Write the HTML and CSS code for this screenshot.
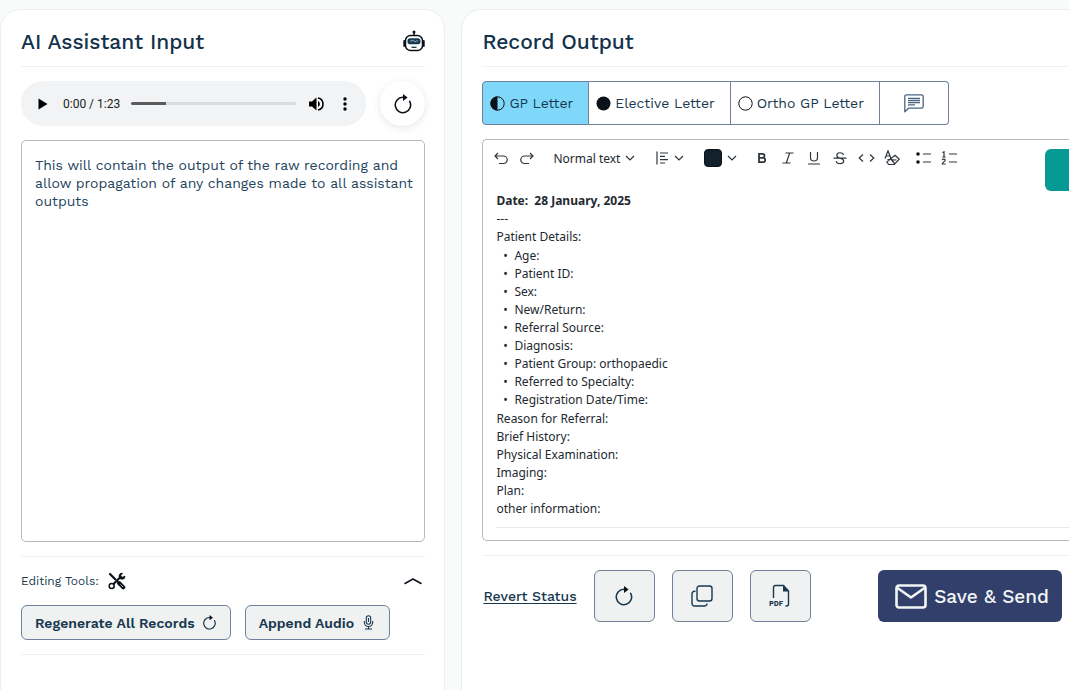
FILE: index.html
```html
<!DOCTYPE html>
<html lang="en">
<head>
    <meta charset="UTF-8">
    <meta name="viewport" content="width=device-width, initial-scale=1.0">
    <title>AI Assistant</title>
    <link rel="stylesheet" href="styles.css">
</head>
<body>
    <!-- Shared icons -->
    <svg class="sprite" aria-hidden="true">
        <symbol id="icon-refresh" viewBox="0 0 24 24">
            <path d="M20 8.800A9.200 9.200 0 1 1 12 4h2" fill="none" stroke="currentColor" stroke-width="1.900" stroke-linecap="round"/>
            <path d="M12 0L17.500 4.200L12 8.500Z" fill="#0b1118"/>
        </symbol>
        <symbol id="icon-chevron" viewBox="0 0 10 6">
            <path d="M1 1l4 4 4-4" fill="none" stroke="currentColor" stroke-width="1.2"/>
        </symbol>
    </svg>

    <main class="layout">
        <!-- Input -->
        <section class="card">
            <header class="card-header">
                <h2>AI Assistant Input</h2>
                <svg class="robot" viewBox="0 0 22 22">
                    <circle cx="11" cy="2" r="1.5" fill="#0b1118"/>
                    <path d="M11 3v3" stroke="#0b1118" stroke-width="1.500"/>
                    <rect x="2.500" y="5.500" width="17" height="15" rx="5" fill="#fff" stroke="#0b1118" stroke-width="1.5"/>
                    <path d="M1.200 11v5M20.800 11v5" stroke="#0b1118" stroke-width="1.800" stroke-linecap="round"/>
                    <rect x="4.500" y="8.300" width="13" height="6" rx="2.500" fill="#17384f"/>
                    <path d="M7 11h2l1.300-1 1.700 2 1.200-1h2" fill="none" stroke="#9fb6c4" stroke-width=".9"/>
                    <path d="M8.500 17.300h5" stroke="#17384f" stroke-width="1.300"/>
                </svg>
            </header>

            <div class="audio-row">
                <div class="player">
                    <button class="player-btn" aria-label="Play">
                        <svg width="10" height="12" viewBox="0 0 10 12"><path d="M.5.500L9.500 6l-9 5.500z"/></svg>
                    </button>
                    <span class="time">0:00 / 1:23</span>
                    <input class="seek" type="range" min="0" max="83" value="0" aria-label="Seek">
                    <button class="player-btn" aria-label="Mute">
                        <svg width="16" height="16" viewBox="0 0 16 16">
                            <path d="M1 5.500h3L8.500 1.500v13L4 10.500H1z"/>
                            <path d="M10 5v6a3.300 3.300 0 0 0 0-6z"/>
                            <path d="M10 2a6.100 6.100 0 0 1 0 12" fill="none" stroke="#000" stroke-width="1.600"/>
                        </svg>
                    </button>
                    <button class="player-btn" aria-label="More">
                        <svg width="4" height="14" viewBox="0 0 4 14"><circle cx="2" cy="2" r="1.700"/><circle cx="2" cy="7" r="1.700"/><circle cx="2" cy="12" r="1.700"/></svg>
                    </button>
                </div>
                <button class="round-btn" aria-label="Reload">
                    <svg width="20" height="20"><use href="#icon-refresh"/></svg>
                </button>
            </div>

            <textarea class="raw-text" aria-label="Raw recording">This will contain the output of the raw recording and allow propagation of any changes made to all assistant outputs</textarea>

            <div class="tools">
                <div class="tools-header">
                    <span>Editing Tools:</span>
                    <svg width="18" height="18" viewBox="0 0 18 18" fill="none" stroke="#0b1118">
                        <path d="M2 2l5 5" stroke-width="2.200" stroke-linecap="round"/>
                        <path d="M6.500 6.500l4.500 4.500" stroke-width="1.300"/>
                        <path d="M11 11l4.300 4.300" stroke-width="4" stroke-linecap="round"/>
                        <path d="M12.500 12.500l2.500 2.500" stroke="#fff" stroke-width=".7"/>
                        <path d="M5 12.500L12 5.500" stroke-width="2.200"/>
                        <circle cx="3.700" cy="14" r="2.500" stroke-width="1.500"/>
                        <path d="M14.500 1.300A3 3 0 1 0 17 4.200L14.500 5.200L13 3.700z" fill="#0b1118" stroke-width=".8"/>
                        <path d="M16 1.600L13.600 4.100" stroke="#fff" stroke-width="1.200"/>
                    </svg>
                    <button class="collapse" aria-label="Collapse">
                        <svg width="18" height="8" viewBox="0 0 18 8"><path d="M1 6.500L9 2l8 4.500" fill="none" stroke="#0b1118" stroke-width="1.500" stroke-linecap="round" stroke-linejoin="round"/></svg>
                    </button>
                </div>
                <div class="tools-buttons">
                    <button class="btn">Regenerate All Records
                        <svg width="15" height="15"><use href="#icon-refresh"/></svg>
                    </button>
                    <button class="btn">Append Audio
                        <svg width="15" height="15" viewBox="0 0 15 15" fill="none" stroke="#17384f" stroke-width="1.100">
                            <rect x="5.300" y=".7" width="4.400" height="8.600" rx="2.200"/>
                            <path d="M3.300 6v1.300a4.200 4.200 0 0 0 8.400 0V6M7.500 11.500v2.500M4 14h7M7.500 3v4"/>
                        </svg>
                    </button>
                </div>
            </div>
        </section>

        <!-- Output -->
        <section class="card card-output">
            <header class="card-header">
                <h2>Record Output</h2>
            </header>

            <div class="tabs">
                <button class="tab active">
                    <svg width="15" height="15" viewBox="0 0 15 15"><circle cx="7.500" cy="7.500" r="6.700" fill="none" stroke="#0b1118"/><path d="M7.500.500a7 7 0 0 0 0 14z" fill="#0b1118"/></svg>
                    GP Letter
                </button>
                <button class="tab">
                    <svg width="15" height="15" viewBox="0 0 15 15"><circle cx="7.500" cy="7.500" r="7" fill="#0b1118"/></svg>
                    Elective Letter
                </button>
                <button class="tab">
                    <svg width="15" height="15" viewBox="0 0 15 15"><circle cx="7.500" cy="7.500" r="6.700" fill="none" stroke="#0b1118"/></svg>
                    Ortho GP Letter
                </button>
                <button class="tab tab-icon" aria-label="Comments">
                    <svg width="20" height="19" viewBox="0 0 20 19" fill="none" stroke="#4a6480" stroke-width="1.300">
                        <path d="M.8 17.800V2.500a1.700 1.700 0 0 1 1.700-1.700h15a1.700 1.700 0 0 1 1.700 1.700v10a1.700 1.700 0 0 1-1.700 1.700H4.500z" stroke-linejoin="round"/>
                        <path d="M4 4.300h12M4 6.500h12M4 8.700h12M4 10.900h7"/>
                    </svg>
                </button>
            </div>

            <div class="editor">
                <div class="toolbar">
                    <div class="group">
                        <button class="tool" aria-label="Undo">
                            <svg width="14" height="13" viewBox="0 0 14 13"><path d="M4 1L1 4l3 3M1 4h8.500a3.500 3.500 0 0 1 0 7.500H5"/></svg>
                        </button>
                        <button class="tool" aria-label="Redo">
                            <svg width="14" height="13" viewBox="0 0 14 13"><path d="M10 1l3 3-3 3M13 4H4.500a3.500 3.500 0 0 0 0 7.500H9"/></svg>
                        </button>
                    </div>
                    <label class="group style-select">
                        <select aria-label="Text style">
                            <option>Normal text</option>
                        </select>
                        <svg class="chevron"><use href="#icon-chevron"/></svg>
                    </label>
                    <button class="group drop" aria-label="Align">
                        <svg width="13" height="14" viewBox="0 0 13 14"><path d="M1 .5v13M4 2h8M4 5.300h5M4 8.600h8M4 12h5"/></svg>
                        <svg class="chevron"><use href="#icon-chevron"/></svg>
                    </button>
                    <button class="group drop" aria-label="Text colour">
                        <span class="swatch"></span>
                        <svg class="chevron"><use href="#icon-chevron"/></svg>
                    </button>
                    <div class="group">
                        <button class="tool" aria-label="Bold">
                            <svg width="14" height="14" viewBox="0 0 14 14"><path d="M4 2.800h3.500a2 2 0 0 1 0 4H4zM4 6.800h4a2.200 2.200 0 0 1 0 4.400H4z" stroke-width="1.800"/></svg>
                        </button>
                        <button class="tool" aria-label="Italic">
                            <svg width="14" height="14" viewBox="0 0 14 14"><path d="M4.500 2h8M1.500 12h8M8.700 2L5.300 12"/></svg>
                        </button>
                        <button class="tool" aria-label="Underline">
                            <svg width="14" height="14" viewBox="0 0 14 14"><path d="M3.500 1v5.500a3.500 3.500 0 0 0 7 0V1M1 13h12"/></svg>
                        </button>
                        <button class="tool" aria-label="Strikethrough">
                            <svg width="14" height="14" viewBox="0 0 14 14"><path d="M10.500 4C10 1 3.800 1 3.800 4.200c0 1.500 1.200 2.400 3.200 2.900 2.500.600 3.700 1.400 3.700 3 0 3.400-7 3.400-7.500 0M.5 7.200h13"/></svg>
                        </button>
                        <button class="tool" aria-label="Code">
                            <svg width="17" height="10" viewBox="0 0 17 10"><path d="M5 1.500L1.200 5 5 8.500M12 1.500L15.800 5 12 8.500"/></svg>
                        </button>
                        <button class="tool" aria-label="Clear formatting">
                            <svg width="16" height="16" viewBox="0 0 16 16"><path d="M1 8.500L4 .8l3 7.700M2 6h4M3.500 9.500l9 .5M11 5.200l4.300 4-5 5.300H4.700L2.800 12zM6 8l5 6"/></svg>
                        </button>
                    </div>
                    <div class="group">
                        <button class="tool" aria-label="Bulleted list">
                            <svg width="16" height="14" viewBox="0 0 16 14"><circle class="dot" cx="3" cy="3" r="1.800"/><circle class="dot" cx="3" cy="11" r="1.800"/><path d="M8 3h8M8 11h8"/></svg>
                        </button>
                        <button class="tool" aria-label="Numbered list">
                            <svg width="16" height="14" viewBox="0 0 16 14"><path d="M1.500 1.500L3 .8V6M1.200 6h3.500M1.300 9c.500-1.500 3-1 2.800.300C4 10.500 1.300 11.500 1.300 13h3.400M8 3h8M8 11h8"/></svg>
                        </button>
                    </div>
                </div>

                <div class="document">
                    <p><strong>Date:&nbsp; 28 January, 2025</strong></p>
                    <p>---</p>
                    <p>Patient Details:</p>
                    <ul>
                        <li>Age:</li>
                        <li>Patient ID:</li>
                        <li>Sex:</li>
                        <li>New/Return:</li>
                        <li>Referral Source:</li>
                        <li>Diagnosis:</li>
                        <li>Patient Group: orthopaedic</li>
                        <li>Referred to Specialty:</li>
                        <li>Registration Date/Time:</li>
                    </ul>
                    <p>Reason for Referral:</p>
                    <p>Brief History:</p>
                    <p>Physical Examination:</p>
                    <p>Imaging:</p>
                    <p>Plan:</p>
                    <p>other information:</p>
                </div>
                <button class="editor-action" aria-label="Save"></button>
            </div>

            <div class="actions">
                <a class="revert" href="#">Revert Status</a>
                <button class="action-btn" aria-label="Regenerate">
                    <svg width="20" height="20"><use href="#icon-refresh"/></svg>
                </button>
                <button class="action-btn" aria-label="Copy">
                    <svg width="22" height="22" viewBox="0 0 22 22" fill="none" stroke="#17384f" stroke-width="1.400">
                        <rect x="6" y="1" width="15" height="15" rx="2.500"/>
                        <path d="M4.500 6.200H3.500A2.500 2.500 0 0 0 1 8.700V18.500A2.500 2.500 0 0 0 3.500 21h10A2.500 2.500 0 0 0 16 18.500"/>
                    </svg>
                </button>
                <button class="action-btn" aria-label="Export PDF">
                    <svg width="22" height="24" viewBox="0 0 22 24">
                        <path d="M4.500 14V3.500A2 2 0 0 1 6.500 1.500h8L19.500 7v13a2 2 0 0 1-2 2h-1" fill="none" stroke="#17384f" stroke-width="1.400"/>
                        <path d="M14 1.500v6h6z" fill="#17384f"/>
                        <text x="0" y="22" class="pdf-label">PDF</text>
                    </svg>
                </button>
                <button class="save-btn">
                    <svg width="32" height="25" viewBox="0 0 32 25" fill="none" stroke="#f2f5f6" stroke-width="2.600">
                        <rect x="1.500" y="1.500" width="29" height="22" rx="2.500"/>
                        <path d="M2.500 4L16 13.500 29.500 4" stroke-linejoin="round"/>
                    </svg>
                    Save &amp; Send
                </button>
            </div>
        </section>
    </main>
</body>
</html>
```
FILE: styles.css
```css
* {
    box-sizing: border-box;
}

body {
    margin: 0;
    height: 100vh;
    overflow: hidden;
    background: #f9fbfb;
    color: #17384f;
    font-family: "Work Sans", Inter, sans-serif;
    font-size: 14px;
}

button {
    display: flex;
    align-items: center;
    justify-content: center;
    padding: 0;
    border: none;
    background: none;
    color: inherit;
    font: inherit;
    white-space: nowrap;
    cursor: pointer;
}

.sprite {
    display: none;
}

.layout {
    display: grid;
    grid-template-columns: 5fr 7fr;
    padding-top: 9px;
}

.card {
    display: flex;
    flex-direction: column;
    gap: 14px;
    min-width: 0;
    padding: 11px 19px 52px 20px;
    background: #fff;
    border: 1px solid #e9eeee;
    border-radius: 20px;
}

/* runs off the right side of the window */
.card-output {
    margin-left: 16px;
    padding-right: 0;
    border-right: none;
    border-radius: 20px 0 0 20px;
}

.card-header {
    display: flex;
    align-items: center;
    justify-content: space-between;
    height: 46px;
    padding-bottom: 5px;
    border-bottom: 1px solid #eff1f2;
}

h2 {
    margin: 0;
    color: #14324a;
    font-size: 21px;
    font-weight: 500;
}

.robot {
    width: 22px;
    height: 22px;
}

/* Audio player */
.audio-row {
    display: flex;
    gap: 14px;
    height: 45px;
}

.player {
    display: flex;
    flex: 1;
    align-items: center;
    gap: 11px;
    min-width: 0;
    padding: 0 12px 0 13px;
    background: #f1f3f4;
    border-radius: 22px;
}

.player-btn {
    width: 18px;
    height: 24px;
}

.time {
    color: #1c1c1c;
    font-family: Roboto, sans-serif;
    font-size: 12px;
    white-space: nowrap;
}

.seek {
    flex: 1;
    min-width: 0;
    height: 3px;
    margin: 0;
    appearance: none;
    background: linear-gradient(to right, #5b5b5b 21%, #d9dbdc 21%);
    border-radius: 2px;
}

.seek::-webkit-slider-thumb {
    appearance: none;
    width: 0;
    height: 0;
}

.round-btn {
    width: 45px;
    height: 45px;
    color: #0b1118;
    border-radius: 50%;
    box-shadow: 0 2px 8px rgba(0, 0, 0, 0.1);
}

.raw-text {
    display: block;
    width: 100%;
    height: 402px;
    padding: 15px 8px 15px 13px;
    border: 1px solid #b4b9bd;
    border-radius: 5px;
    color: #23435c;
    font: inherit;
    line-height: 18px;
    resize: none;
    outline: none;
}

.tools {
    padding-bottom: 14px;
    border-top: 1px solid #eff1f2;
    border-bottom: 1px solid #eff1f2;
}

.tools-header {
    display: flex;
    align-items: center;
    gap: 9px;
    height: 48px;
    font-size: 12px;
}

.collapse {
    width: 24px;
    height: 24px;
    margin-left: auto;
}

.tools-buttons {
    display: flex;
    gap: 14px;
}

.btn {
    gap: 7px;
    height: 35px;
    padding: 0 13px;
    background: #f0f2f2;
    border: 1px solid #6f809b;
    border-radius: 6px;
    font-weight: 600;
}

/* Letter tabs */
.tabs {
    display: flex;
    height: 44px;
}

.tab {
    gap: 4px;
    padding: 0 15px 0 7px;
    border: 1px solid #6f809b;
    border-left-width: 0;
}

.tab:first-child {
    border-left-width: 1px;
    border-radius: 4px 0 0 4px;
}

.tab:last-child {
    border-radius: 0 4px 4px 0;
}

.tab.active {
    background: #7fd8fa;
}

.tab-icon {
    width: 69px;
    padding: 0;
}

/* Editor */
.editor {
    position: relative;
    height: 402px;
    padding: 5px 0 0 5px;
    border: 1px solid #b4b9bd;
    border-right: none;
    border-radius: 5px 0 0 5px;
    overflow: hidden;
    color: #23292f;
    font-family: "Noto Sans", sans-serif;
    font-size: 12px;
}

.toolbar {
    display: flex;
    gap: 5px;
    height: 26px;
}

.group {
    display: flex;
    align-items: center;
}

.tool {
    width: 26px;
    height: 26px;
}

.toolbar svg {
    fill: none;
    stroke: #2f363d;
    stroke-width: 1.2;
}

.toolbar .dot {
    fill: #111;
    stroke: none;
}

.toolbar .chevron {
    width: 10px;
    height: 6px;
    color: #2f363d;
}

.style-select {
    gap: 4px;
    margin: 0 8px;
}

.style-select select {
    padding: 0;
    appearance: none;
    border: none;
    background: none;
    color: inherit;
    font: inherit;
}

.drop {
    gap: 5px;
    padding: 0 7px 0 8px;
}

.swatch {
    width: 18px;
    height: 18px;
    background: #12212c;
    border: 1px solid #0b1118;
    border-radius: 4px;
}

.document {
    margin: 21px 0 0 8px;
    padding-bottom: 9px;
    border-bottom: 1px solid #e6eaec;
    line-height: 18px;
}

.document p {
    margin: 0;
}

.document ul {
    margin: 1px 0;
    padding: 0;
    list-style: none;
}

.document li::before {
    content: "•";
    display: inline-block;
    width: 18px;
    text-align: center;
}

.editor-action {
    position: absolute;
    top: 9px;
    right: -36px;
    width: 60px;
    height: 42px;
    background: #059a94;
    border-radius: 6px;
}

/* Bottom actions */
.actions {
    display: flex;
    align-items: center;
    gap: 17px;
    padding: 14px 7px 0 1px;
    border-top: 1px solid #eff1f2;
}

.revert {
    color: inherit;
    font-weight: 500;
    white-space: nowrap;
    text-underline-offset: 2px;
}

.action-btn {
    width: 61px;
    height: 52px;
    background: #f0f2f2;
    border: 1px solid #6f809b;
    border-radius: 6px;
}

.pdf-label {
    fill: #17384f;
    font-size: 7px;
    font-weight: 700;
}

.save-btn {
    gap: 7px;
    height: 52px;
    margin-left: auto;
    padding: 0 13px 0 17px;
    background: #323f6b;
    border-radius: 6px;
    color: #f2f5f6;
    font-size: 19px;
    font-weight: 500;
}
```
